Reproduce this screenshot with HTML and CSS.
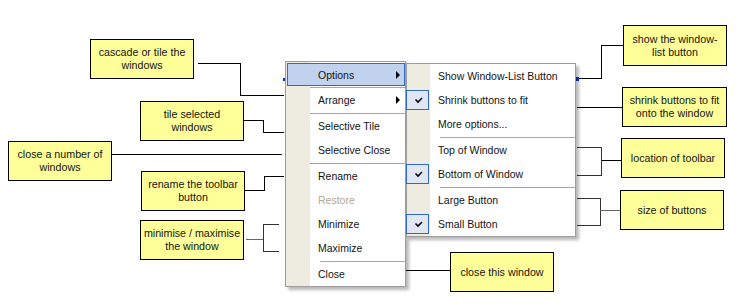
FILE: index.html
```html
<!DOCTYPE html>
<html>
  <head>
    <title>Toolbar button menu</title>
    <link rel="stylesheet" href="styles.css">
  </head>
  <body>
    <div class="diagram">
      <svg class="wires" width="740" height="306" viewBox="0 0 740 306">
        <g fill="none" stroke="#000" stroke-width="1" shape-rendering="crispEdges">
          <path d="M198 63.5H240.5V95.5H284"/>
          <path d="M244 120.5H263.5V132.5H284"/>
          <path d="M112 154.5H282"/>
          <path d="M245 190.5H264.5V176.5H284"/>
          <path d="M279 224.5H263.5V251.5H279" stroke="#333"/>
          <path d="M246 239.5H263" stroke="#666"/>
          <path d="M623 45.5H601.5V78.5H578"/>
          <path d="M577 107.5H622"/>
          <path d="M577 147.5H601.5V175.5H577" stroke="#333"/>
          <path d="M601.5 160.5H621"/>
          <path d="M577 198.5H600.5V225.5H577" stroke="#333"/>
          <path d="M600 210.5H620" stroke="#666"/>
          <path d="M405 270.5H450"/>
        </g>
        <rect x="576" y="77" width="3" height="4" fill="#0b2fd6"/>
        <rect x="283" y="78" width="2" height="3" fill="#0b2fd6"/>
      </svg>

      <div class="note note-cascade">cascade or tile the<br>windows</div>
      <div class="note note-tile">tile selected<br>windows</div>
      <div class="note note-close-many">close a number of<br>windows</div>
      <div class="note note-rename">rename the toolbar<br>button</div>
      <div class="note note-minmax">minimise / maximise<br>the window</div>
      <div class="note note-list">show the window-<br>list button</div>
      <div class="note note-shrink">shrink buttons to fit<br>onto the window</div>
      <div class="note note-location">location of toolbar</div>
      <div class="note note-size">size of buttons</div>
      <div class="note note-close">close this window</div>

      <div class="menu menu-main">
        <div class="item active">Options<i class="arrow"></i></div>
        <div class="sep"></div>
        <div class="item">Arrange<i class="arrow"></i></div>
        <div class="sep"></div>
        <div class="item">Selective Tile</div>
        <div class="item">Selective Close</div>
        <div class="sep"></div>
        <div class="item">Rename</div>
        <div class="item disabled">Restore</div>
        <div class="item">Minimize</div>
        <div class="item">Maximize</div>
        <div class="sep sep-inset"></div>
        <div class="item">Close</div>
      </div>

      <div class="menu menu-sub">
        <div class="item"><span class="mark"></span>Show Window-List Button</div>
        <div class="item"><span class="mark on"><svg width="21" height="18" viewBox="0 0 21 18"><path d="M8.5 8.5L11 11L15 7" fill="none" stroke="#000" stroke-width="1.6"/></svg></span>Shrink buttons to fit</div>
        <div class="item"><span class="mark"></span>More options...</div>
        <div class="sep"></div>
        <div class="item"><span class="mark"></span>Top of Window</div>
        <div class="item"><span class="mark on"><svg width="21" height="18" viewBox="0 0 21 18"><path d="M8.5 8.5L11 11L15 7" fill="none" stroke="#000" stroke-width="1.6"/></svg></span>Bottom of Window</div>
        <div class="sep"></div>
        <div class="item"><span class="mark"></span>Large Button</div>
        <div class="item"><span class="mark on"><svg width="21" height="18" viewBox="0 0 21 18"><path d="M8.5 8.5L11 11L15 7" fill="none" stroke="#000" stroke-width="1.6"/></svg></span>Small Button</div>
      </div>
    </div>
  </body>
</html>
```

FILE: styles.css
```css
body { margin: 0; background: #fff; font-family: "Liberation Sans", Arial, sans-serif; }

.diagram {
  position: relative;
  width: 740px;
  height: 306px;
  overflow: hidden;
}

.wires { position: absolute; left: 0; top: 0; }

/* Yellow callouts */
.note {
  position: absolute;
  box-sizing: border-box;
  width: 104px;
  height: 40px;
  display: flex;
  align-items: center;
  justify-content: center;
  text-align: center;
  background: #ffff99;
  border: 1px solid #000;
  color: #141414;
  font-size: 10.7px;
  line-height: 13px;
  white-space: nowrap;
}

.note-cascade { left: 90px; top: 39px; }
.note-tile { left: 140px; top: 101px; }
.note-close-many { left: 8px; top: 141px; }
.note-rename { left: 141px; top: 171px; }
.note-minmax { left: 140px; top: 220px; }
.note-list { left: 623px; top: 25px; height: 41px; }
.note-shrink { left: 622px; top: 87px; width: 105px; }
.note-location { left: 621px; top: 138px; }
.note-size { left: 620px; top: 190px; }
.note-close { left: 450px; top: 252px; }

/* Menus */
.menu {
  position: absolute;
  box-sizing: border-box;
  border: 1px solid #9d9d9d;
  box-shadow: 3px 3px 3px rgba(0, 0, 0, 0.28);
  font-size: 10.5px;
  color: #141414;
}

.menu-main {
  left: 285px;
  top: 61px;
  width: 121px;
  background: linear-gradient(to right, #eeebe0 24px, #fff 24px);
}

.menu-sub {
  left: 406px;
  top: 63px;
  width: 170px;
  background: linear-gradient(to right, #eeebe0 23px, #fff 23px);
}

.item {
  display: flex;
  align-items: center;
  height: 24px;
  white-space: nowrap;
}

.menu-main .item { padding-left: 32px; }

.menu-main .item.active {
  box-sizing: border-box;
  height: 23px;
  margin: 1px 0 0 1px;
  padding-left: 30px;
  background: #c1d2ee;
  border: 1px solid #316ac5;
}

.item.disabled { color: #aca899; }

.arrow {
  margin-left: auto;
  margin-right: 5px;
  width: 0;
  height: 0;
  border-left: 4px solid #000;
  border-top: 4px solid transparent;
  border-bottom: 4px solid transparent;
}

.menu-main .item.active .arrow { margin-right: 4px; }

.sep {
  height: 1px;
  margin: 1px 0 0 24px;
  background: #a7a7a7;
}

.menu-main .sep-inset { margin-left: 34px; }
.menu-sub .sep { margin-left: 33px; }

.mark {
  box-sizing: border-box;
  width: 23px;
  height: 20px;
  margin-left: -1px;
  margin-right: 9px;
  flex-shrink: 0;
}

.mark.on {
  border: 1px solid #316ac5;
  background: #e1e6f5;
}

.mark svg { display: block; }
```
